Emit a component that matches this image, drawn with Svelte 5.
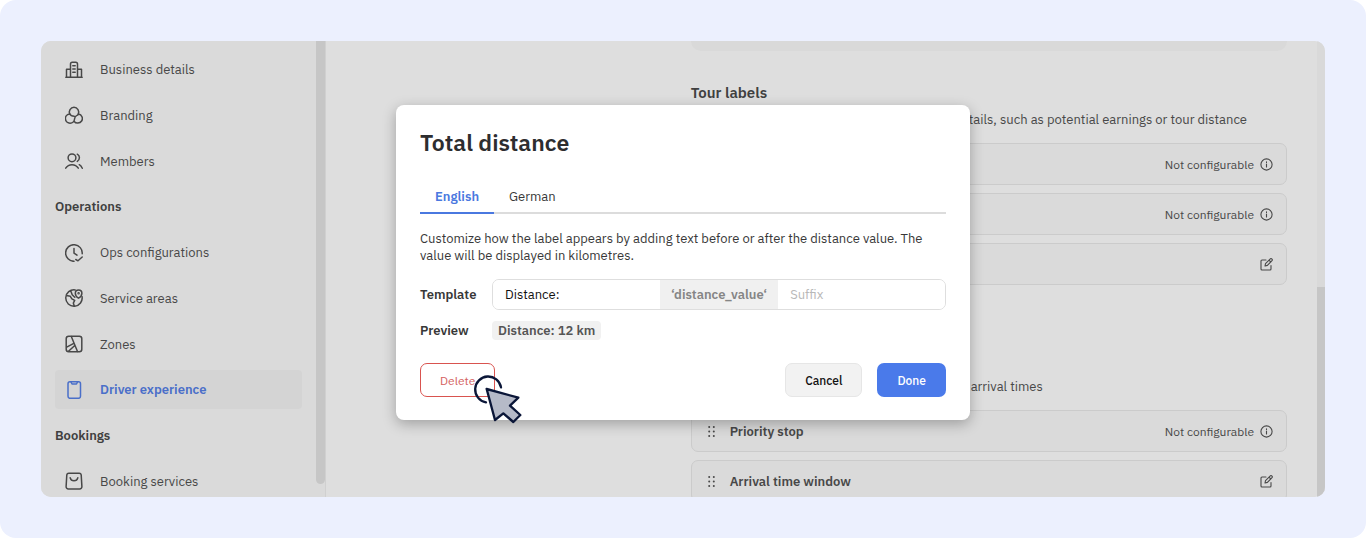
<script>
  const nav = [
    { icon: 'building', label: 'Business details' },
    { icon: 'circles', label: 'Branding' },
    { icon: 'people', label: 'Members' },
    { heading: 'Operations' },
    { icon: 'clock', label: 'Ops configurations' },
    { icon: 'globe', label: 'Service areas' },
    { icon: 'zones', label: 'Zones' },
    { icon: 'phone', label: 'Driver experience', active: true },
    { heading: 'Bookings' },
    { icon: 'bag', label: 'Booking services' }
  ];
  const tabs = ['English', 'German'];
  let tab = $state('English');
  let prefix = $state('Distance:');
  let suffix = $state('');
</script>

{#snippet icon(name)}
  <svg class="icon" viewBox="0 0 18 18" aria-hidden="true">
    {#if name === 'building'}
      <path d="M.8 16.300h16.400M1.500 16.300V8.300H5.500M12.500 8.300H16.500V16.300M5.500 16.300V3Q5.500 1.200 7.300 1.200h3.400Q12.500 1.200 12.500 3V16.300M7.800 4.800h2.400M7.800 8h2.400M7.800 11.200h2.400" />
    {:else if name === 'circles'}
      <path d="M4.800 8.100A4.700 4.700 0 1 1 13.200 8.100" />
      <path d="M4.300 8A4.600 4.600 0 1 0 9.600 12.800C9.700 11.400 10.200 10.200 12 9.400A4.700 4.700 0 0 0 13.600 8A4.600 4.600 0 1 1 9 15.200M4.700 7.700C5.400 9.400 7.200 10.200 9.200 10.200" />
    {:else if name === 'people'}
      <circle cx="7" cy="5.800" r="3.900" />
      <path d="M.7 16.200C2.200 13.800 4.300 12.700 7 12.700s4.800 1.100 6.300 3.500M12.300 2.200q2.200 1.200 2.100 3.600t-2.100 3.600M14.300 12.700c1.300.7 2.200 1.800 3 3.500" />
    {:else if name === 'clock'}
      <path d="M9 17.300A8.300 8.300 0 1 1 17.200 9.800M9 4.600V9.200L12 11.200M10.800 15.500l2.200 1.300 4.200-3.800" />
    {:else if name === 'globe'}
      <path d="M10.200.9A8.200 8.200 0 1 0 17 7.400M1.500 6.500l3.800.8 1.600 2.600 2.800 1.500-1.400 2.700 1 2.900M5.700 1.800l1.500 3.900 2.600 2.600" />
      <path d="M13.500 9.200C11.300 7.800 10.300 6.300 10.300 4.200a3.300 3.300 0 0 1 6.600 0C16.900 6.300 15.700 7.800 13.500 9.200Z" />
      <circle cx="13.600" cy="4.200" r=".5" />
    {:else if name === 'zones'}
      <rect x="1.200" y="1.200" width="15.600" height="15.600" rx="2.500" />
      <path d="M6.300 1.500 12.500 16.500M1.700 12.200 8.800 8.400M3.500 16.300 9.500 10.700" />
    {:else if name === 'phone'}
      <rect x="3" y=".8" width="12.500" height="16.500" rx="2" />
      <path d="M6 1l1 2h4.500l1-2" />
    {:else if name === 'bag'}
      <path d="M3.800 1.200h10.400a2 2 0 0 1 2 1.700l.7 11.700a2.200 2.200 0 0 1-2.200 2.300H3.300a2.200 2.200 0 0 1-2.200-2.300L1.800 2.900a2 2 0 0 1 2-1.700Z" />
      <path d="M5.200 5.800c.9 3.900 6.700 3.900 7.600 0" />
    {/if}
  </svg>
{/snippet}

{#snippet info()}
  <span class="note">Not configurable</span>
  <svg class="small" viewBox="0 0 13 13" role="img" aria-label="Info">
    <circle cx="6.500" cy="6.500" r="5.600" />
    <path d="M6.500 6v3M6.500 3.800v.6" />
  </svg>
{/snippet}

{#snippet edit()}
  <button class="edit" aria-label="Edit">
    <svg class="small" viewBox="0 0 13 13" aria-hidden="true">
      <path d="M6 2H2A1 1 0 0 0 1 3v8a1 1 0 0 0 1 1h8a1 1 0 0 0 1-1V7.500" />
      <path d="M5 8l.5-2.400L10.300.9a1 1 0 0 1 1.400 0l.3.300a1 1 0 0 1 0 1.400L7.400 7.400ZM9 2.200l1.800 1.800" />
    </svg>
  </button>
{/snippet}

{#snippet grip()}
  <svg class="small grip" viewBox="0 0 13 13" aria-hidden="true">
    {#each [2, 6.5, 11] as y}
      <circle cx="4.200" cy={y} r="1" />
      <circle cx="8.800" cy={y} r="1" />
    {/each}
  </svg>
{/snippet}

<div class="page">
  <div class="frame">
    <aside>
      <nav>
        {#each nav as item}
          {#if item.heading}
            <h2>{item.heading}</h2>
          {:else}
            <a href="#top" class:active={item.active}>{@render icon(item.icon)}{item.label}</a>
          {/if}
        {/each}
      </nav>
      <div class="track"><div class="thumb side"></div></div>
    </aside>

    <main>
      <div class="content">
        <div class="previous"></div>
        <section class="labels">
          <h3>Tour labels</h3>
          <p class="end">details, such as potential earnings or tour distance</p>
          <div class="row">{@render info()}</div>
          <div class="row">{@render info()}</div>
          <div class="row">{@render edit()}</div>
        </section>
        <section class="stops">
          <p class="start">arrival times</p>
          <div class="row">{@render grip()}<strong>Priority stop</strong>{@render info()}</div>
          <div class="row">{@render grip()}<strong>Arrival time window</strong>{@render edit()}</div>
        </section>
      </div>
      <div class="track main-track"><div class="thumb"></div></div>
    </main>
  </div>

  <div class="overlay">
    <div class="modal" role="dialog" aria-labelledby="title">
      <h1 id="title">Total distance</h1>
      <div class="tabs" role="tablist">
        {#each tabs as t}
          <button role="tab" aria-selected={tab === t} class:on={tab === t} onclick={() => (tab = t)}>{t}</button>
        {/each}
      </div>
      <p>Customize how the label appears by adding text before or after the distance value. The value will be displayed in kilometres.</p>
      <div class="form">
        <label for="prefix">Template</label>
        <div class="group">
          <input id="prefix" bind:value={prefix} />
          <span>‘distance_value‘</span>
          <input aria-label="Suffix" placeholder="Suffix" bind:value={suffix} />
        </div>
        <span class="caption">Preview</span>
        <output for="prefix">{prefix} 12 km{suffix}</output>
      </div>
      <footer>
        <div class="target">
          <button class="delete">Delete</button>
          <svg class="cursor" viewBox="0 0 240 210" aria-hidden="true">
            <path class="ring" d="M123 82A39 39 0 1 0 78 127" />
            <path class="arrow" d="M80 87 175 113 150 137 181 165 160 186 130 160 105 180Z" />
          </svg>
        </div>
        <button class="cancel">Cancel</button>
        <button class="done">Done</button>
      </footer>
    </div>
  </div>
</div>

<style>
  :global(body) { background: #fff; }
  .page, .page * { box-sizing: border-box; }
  .page {
    position: relative;
    display: flex;
    height: 100vh;
    padding: 41px;
    border-radius: 16px;
    background: #ecf0fe;
    color: #484848;
    font: 13px/17px "IBM Plex Sans", Roboto, sans-serif;
  }
  h1, h2, h3, p { margin: 0; }
  button, input { font: inherit; }
  .frame {
    flex: 1;
    display: flex;
    min-width: 0;
    border-radius: 10px;
    overflow: hidden;
    background: #dedede;
  }
  aside {
    display: flex;
    flex: 0 0 285px;
    background: #dadada;
    border-right: 1px solid #d0d0d0;
  }
  nav {
    flex: 1;
    display: flex;
    flex-direction: column;
    justify-content: space-between;
    margin-bottom: -4px;
    padding: 9px 14px 0;
  }
  nav a, h2 {
    display: flex;
    align-items: center;
    height: 39px;
    flex: none;
  }
  nav a {
    gap: 17px;
    padding: 0 10px;
    border-radius: 4px;
    color: inherit;
    text-decoration: none;
  }
  nav a.active {
    background: #d4d4d4;
    color: #4a6fc9;
    font-weight: 600;
  }
  h2 { font-size: 13px; font-weight: 600; color: #404040; }
  svg {
    fill: none;
    stroke: currentColor;
    stroke-linecap: round;
    stroke-linejoin: round;
  }
  .icon { width: 18px; height: 18px; stroke-width: 1.5; }
  .small { width: 13px; height: 13px; flex: none; stroke-width: 1.1; display: block; }
  .grip { fill: currentColor; stroke: none; margin-right: 6px; }
  .track { width: 9px; display: flex; align-items: flex-end; }
  .thumb { width: 100%; height: 46%; background: #c6c6c6; }
  .thumb.side { height: auto; align-self: stretch; margin-bottom: 13px; border-radius: 0 0 5px 5px; }
  .main-track { width: 8px; background: #d9d9d9; }

  main { flex: 1; display: flex; min-width: 0; }
  .content {
    flex: 1;
    padding: 0 30px 0 36.5%;
  }
  .previous { height: 10px; border-radius: 0 0 10px 10px; background: #d9d9d9; }
  section { display: flex; flex-direction: column; gap: 8px; }
  .labels { padding-top: 32px; }
  .stops { padding-top: 93px; }
  h3 { font-size: 15px; line-height: 20px; font-weight: 600; color: #404040; }
  section p { margin-bottom: 6px; line-height: 18px; }
  .end { padding-right: 40px; text-align: right; }
  .start { padding-left: 280px; }
  .row {
    display: flex;
    align-items: center;
    justify-content: flex-end;
    gap: 6px;
    height: 42px;
    padding: 0 13px;
    border: 1px solid #cbcbcb;
    border-radius: 7px;
    background: #dadada;
  }
  .row strong { flex: 1; font-weight: 600; }
  .note { font-size: 12px; }
  .edit { padding: 0; border: 0; background: none; color: inherit; }

  .overlay {
    position: absolute;
    inset: 0;
    display: flex;
    align-items: center;
    justify-content: center;
    padding-bottom: 13px;
  }
  .modal {
    width: 574px;
    max-width: 100%;
    padding: 23px 24px;
    border-radius: 8px;
    background: #fff;
    color: #383838;
    box-shadow: 0 4px 14px rgba(0, 0, 0, .28);
  }
  h1 { font-size: 23px; line-height: 28px; font-weight: 600; color: #2d2d2f; }
  .tabs {
    display: flex;
    margin: 22px 0 16px;
    border-bottom: 2px solid #dcdcdc;
  }
  .tabs button {
    height: 36px;
    margin-bottom: -2px;
    padding: 2px 15px 0;
    border: 0;
    border-bottom: 2px solid transparent;
    background: none;
    color: inherit;
  }
  .tabs button.on { border-color: #4a78e0; color: #4a78e0; font-weight: 600; }
  .form {
    display: grid;
    grid-template-columns: 72px 1fr;
    align-items: center;
    row-gap: 11px;
    margin: 15px 0 23px;
  }
  label, .caption, output, .group span { font-weight: 600; }
  .group {
    display: flex;
    height: 31px;
    border: 1px solid #dedede;
    border-radius: 7px;
    overflow: hidden;
  }
  .group input {
    flex: 1;
    min-width: 0;
    padding: 0 12px;
    border: 0;
    background: #fff;
    color: #111;
  }
  .group input::placeholder { color: #b8b8b8; opacity: 1; }
  .group span {
    display: flex;
    align-items: center;
    padding: 0 11px;
    background: #f0f0f0;
    color: #858585;
  }
  output {
    justify-self: start;
    padding: 1px 6px;
    border-radius: 4px;
    background: #f1f1f1;
    color: #555;
  }
  footer { display: flex; }
  .target { position: relative; margin-right: auto; }
  footer button {
    height: 34px;
    padding: 0 19px;
    border: 1px solid transparent;
    border-radius: 7px;
    font-size: 12px;
  }
  .delete { border-color: #d9534f; background: #fff; color: #d4625f; }
  .cancel { margin-right: 15px; border-color: #e6e6e6; background: #f2f2f2; color: #111; font-weight: 500; }
  .done { background: #4a7aea; color: #fff; font-weight: 500; }
  .cursor { position: absolute; left: 40px; top: -3px; width: 80px; height: 70px; stroke: #0b1638; stroke-width: 7; }
  .arrow { fill: #b6bac8; }
</style>
